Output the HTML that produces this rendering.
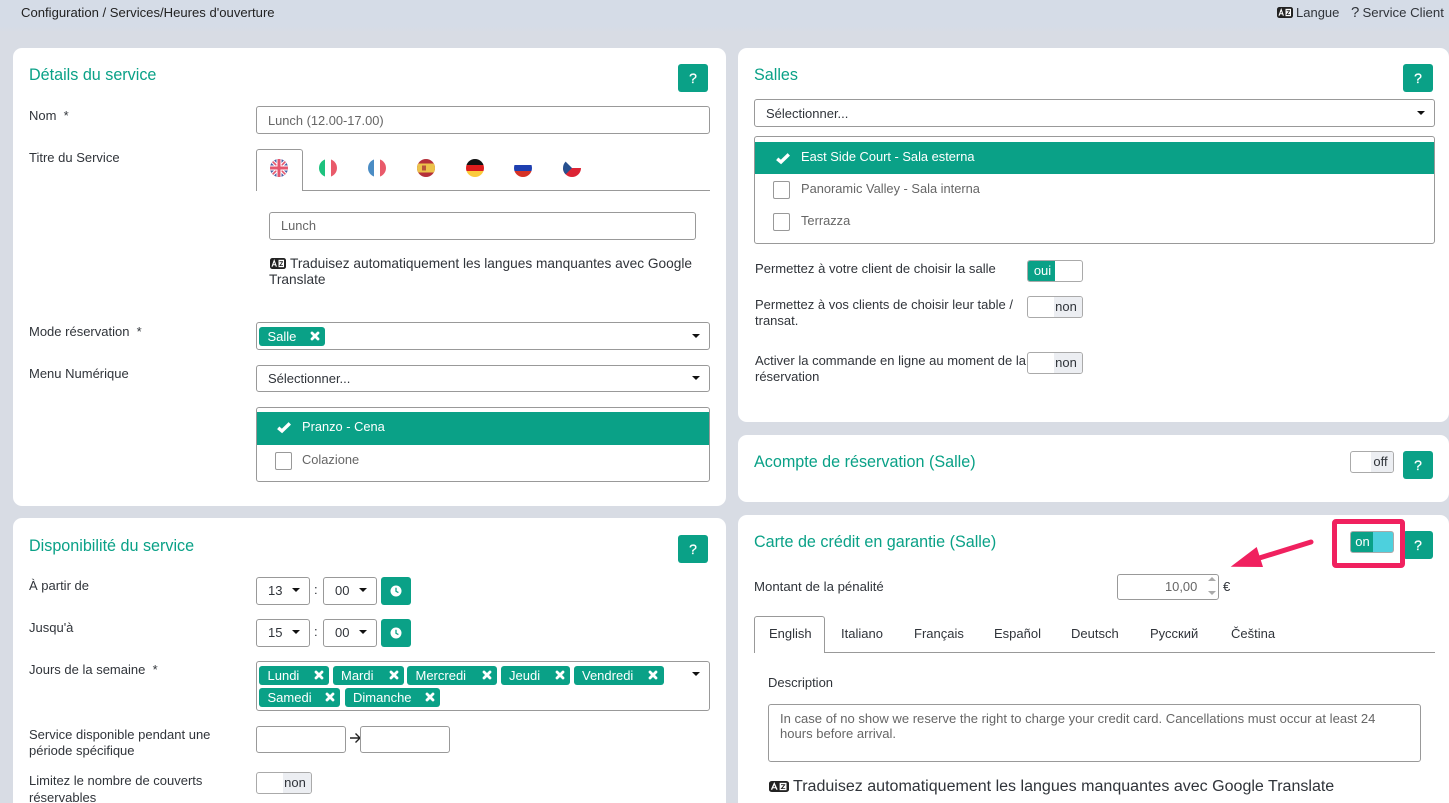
<!DOCTYPE html>
<html lang="fr"><head><meta charset="utf-8"><title>Heures d'ouverture</title>
<style>
html,body{margin:0;padding:0;width:1449px;height:803px;overflow:hidden;background:#d8dce4}
body{position:relative;font-family:"Liberation Sans",sans-serif;font-size:13px;color:#30343a}
.a,.t,.box,.card,.tag,.q,.sw,.cb{position:absolute;box-sizing:border-box}
.t{white-space:nowrap;line-height:16px}
.card{background:#fff;border-radius:9px}
.h{color:#0aa187;font-size:16.15px;line-height:20px}
.box{border:1px solid #999;border-radius:3px;background:#fff}
.q{background:#0aa187;border-radius:3px;color:#fff;font-size:14px;-webkit-text-stroke:.3px #fff;text-align:center;line-height:28px;width:30px;height:28px}
.g{color:#666;font-size:12.85px}
.tag{background:#0aa187;color:#fff;height:19px;line-height:19px;border-radius:3px;padding-left:8.5px;font-size:13px;white-space:nowrap}
.tag svg{position:absolute;top:4px}
.row{background:#0aa187;position:absolute}
.sw{border:1px solid #aaa;border-radius:3px;background:#fff;height:22px;overflow:hidden;font-size:13px;line-height:20px}
.sw b{position:absolute;top:0;bottom:0;font-weight:normal;text-align:center}
.cb{border:1px solid #999;border-radius:2px;width:17px;height:18px;background:#fff}
svg{position:absolute;overflow:visible}
</style></head><body>
<svg width="0" height="0" style="position:absolute"><defs>
<symbol id="x" viewBox="0 0 10 10"><path d="M2 2L8 8M8 2L2 8" stroke="#fff" stroke-width="2.8" stroke-linecap="round"/></symbol>
<symbol id="c" viewBox="0 0 16 14"><path d="M2.2 7.8L6 11L13.8 3.4" fill="none" stroke="#fff" stroke-width="3.4"/></symbol>
<symbol id="tr" viewBox="0 0 16 12" preserveAspectRatio="none"><rect x=".5" y=".5" width="15" height="11" rx="2" fill="#222" stroke="#222"/><rect x="8.5" y="2" width="5.5" height="8" fill="#fff"/><path d="M2 9.5L4.2 2.8L6.4 9.5M3 7.4H5.4" fill="none" stroke="#fff" stroke-width="1.1"/><path d="M9.6 4H13M12.6 4L10 8.3H13" fill="none" stroke="#222" stroke-width=".9"/></symbol>
<symbol id="clk" viewBox="0 0 12 12"><circle cx="6" cy="6" r="5.5" fill="#fff"/><path d="M6 2.8V6.3L8.4 7.6" fill="none" stroke="#0aa187" stroke-width="1.3"/></symbol>
</defs></svg>

<!-- top bar -->
<div class="a" style="left:0;top:0;width:1449px;height:32px;background:linear-gradient(#d5dce7 0,#d5dce7 27px,#d8dce4 32px)"></div>
<div class="t" style="left:21px;top:5px;font-size:13.1px;color:#222">Configuration / Services/Heures d'ouverture</div>
<svg style="left:1277px;top:7px" width="16" height="11"><use href="#tr"/></svg>
<div class="t" style="left:1296px;top:5px">Langue</div>
<div class="t" style="left:1351px;top:5px;font-size:15px">?</div>
<div class="t" style="left:1362.5px;top:5px;font-size:13.2px">Service Client</div>

<!-- Details card -->
<div class="card" style="left:13px;top:48px;width:713px;height:458px"></div>
<div class="t h" style="left:29px;top:65px">Détails du service</div>
<div class="q" style="left:678px;top:64px">?</div>
<div class="t" style="left:29px;top:108px">Nom&nbsp; *</div>
<div class="box" style="left:256px;top:106px;width:454px;height:28px"></div>
<div class="t g" style="left:268px;top:113px">Lunch (12.00-17.00)</div>
<div class="t" style="left:29px;top:150px">Titre du Service</div>
<div class="a" style="left:256px;top:190px;width:454px;height:1px;background:#999"></div>
<div class="a" style="left:256px;top:149px;width:47px;height:42px;background:#fff;border:1px solid #999;border-bottom:0;border-radius:3px 3px 0 0;box-sizing:border-box"></div>
<svg style="left:270px;top:159px" width="18" height="18" viewBox="0 0 18 18"><clipPath id="f1"><circle cx="9" cy="9" r="9"/></clipPath><g clip-path="url(#f1)"><rect width="18" height="18" fill="#4a5fa5"/><path d="M0 0L18 18M18 0L0 18" stroke="#fff" stroke-width="3.6"/><path d="M0 0L18 18M18 0L0 18" stroke="#e5566d" stroke-width="1.6"/><path d="M9 0V18M0 9H18" stroke="#fff" stroke-width="5"/><path d="M9 0V18M0 9H18" stroke="#e5566d" stroke-width="3"/></g></svg>
<svg style="left:319px;top:159px" width="18" height="18" viewBox="0 0 18 18"><clipPath id="f2"><circle cx="9" cy="9" r="9"/></clipPath><g clip-path="url(#f2)"><rect width="6" height="18" fill="#1cc27e"/><rect x="12" width="6" height="18" fill="#e95a6a"/></g></svg>
<svg style="left:368px;top:159px" width="18" height="18" viewBox="0 0 18 18"><clipPath id="f3"><circle cx="9" cy="9" r="9"/></clipPath><g clip-path="url(#f3)"><rect width="6" height="18" fill="#4a8cc4"/><rect x="12" width="6" height="18" fill="#e95a6a"/></g></svg>
<svg style="left:417px;top:159px" width="18" height="18" viewBox="0 0 18 18"><clipPath id="f4"><circle cx="9" cy="9" r="9"/></clipPath><g clip-path="url(#f4)"><rect width="18" height="18" fill="#b5303a"/><rect y="4.5" width="18" height="9" fill="#ecc24a"/><rect x="5" y="6.5" width="4" height="5" fill="#b8553a"/></g></svg>
<svg style="left:466px;top:159px" width="18" height="18" viewBox="0 0 18 18"><clipPath id="f5"><circle cx="9" cy="9" r="9"/></clipPath><g clip-path="url(#f5)"><rect width="18" height="6" fill="#111"/><rect y="6" width="18" height="6" fill="#dd1c1c"/><rect y="12" width="18" height="6" fill="#fbcb3c"/></g></svg>
<svg style="left:514px;top:159px" width="18" height="18" viewBox="0 0 18 18"><clipPath id="f6"><circle cx="9" cy="9" r="9"/></clipPath><g clip-path="url(#f6)"><rect width="18" height="6" fill="#fff"/><rect y="6" width="18" height="6" fill="#1e3fb0"/><rect y="12" width="18" height="6" fill="#d63226"/></g></svg>
<svg style="left:563px;top:159px" width="18" height="18" viewBox="0 0 18 18"><clipPath id="f7"><circle cx="9" cy="9" r="9"/></clipPath><g clip-path="url(#f7)"><rect width="18" height="9" fill="#fff"/><rect y="9" width="18" height="9" fill="#dc2434"/><path d="M0 0L9 9L0 18Z" fill="#27508f"/></g></svg>
<div class="box" style="left:269px;top:212px;width:427px;height:28px"></div>
<div class="t g" style="left:281px;top:218px">Lunch</div>
<svg style="left:269.5px;top:257.5px" width="16" height="11"><use href="#tr"/></svg>
<div class="t" style="left:290px;top:255.5px;font-size:13.7px">Traduisez automatiquement les langues manquantes avec Google</div>
<div class="t" style="left:269px;top:271.5px;font-size:13.7px">Translate</div>
<div class="t" style="left:29px;top:324px">Mode réservation&nbsp; *</div>
<div class="box" style="left:256px;top:322px;width:454px;height:28px"></div>
<div class="tag" style="left:259px;top:327px;width:66px">Salle<svg style="left:51px" width="10" height="10"><use href="#x"/></svg></div>
<div class="a" style="left:692px;top:334px;border:4px solid transparent;border-top:4.5px solid #111;border-bottom:0"></div>
<div class="t" style="left:29px;top:366px">Menu Numérique</div>
<div class="box" style="left:256px;top:365px;width:454px;height:27px"></div>
<div class="t" style="left:268px;top:371px">Sélectionner...</div>
<div class="a" style="left:692px;top:376px;border:4px solid transparent;border-top:4.5px solid #111;border-bottom:0"></div>
<div class="box" style="left:256px;top:407px;width:454px;height:75px"></div>
<div class="row" style="left:257px;top:412px;width:452px;height:33px"></div>
<svg style="left:276px;top:420px" width="16" height="14"><use href="#c"/></svg>
<div class="t" style="left:302px;top:419px;color:#fff;font-size:12.85px">Pranzo - Cena</div>
<div class="cb" style="left:275px;top:452px"></div>
<div class="t g" style="left:302px;top:452px">Colazione</div>

<!-- Disponibilite card -->
<div class="card" style="left:13px;top:518px;width:713px;height:300px"></div>
<div class="t h" style="left:29px;top:536px">Disponibilité du service</div>
<div class="q" style="left:678px;top:535px">?</div>
<div class="t" style="left:29px;top:578px">À partir de</div>
<div class="box" style="left:256px;top:577px;width:54px;height:28px"></div>
<div class="t" style="left:268px;top:583px">13</div>
<div class="a" style="left:292px;top:588px;border:4px solid transparent;border-top:4.5px solid #111;border-bottom:0"></div>
<div class="t" style="left:314px;top:582px">:</div>
<div class="box" style="left:323px;top:577px;width:54px;height:28px"></div>
<div class="t" style="left:335px;top:583px">00</div>
<div class="a" style="left:359px;top:588px;border:4px solid transparent;border-top:4.5px solid #111;border-bottom:0"></div>
<div class="a" style="left:381px;top:577px;width:30px;height:28px;background:#0aa187;border-radius:3px"><svg style="left:9px;top:8px" width="12" height="12"><use href="#clk"/></svg></div>
<div class="t" style="left:29px;top:620px">Jusqu'à</div>
<div class="box" style="left:256px;top:619px;width:54px;height:28px"></div>
<div class="t" style="left:268px;top:625px">15</div>
<div class="a" style="left:292px;top:630px;border:4px solid transparent;border-top:4.5px solid #111;border-bottom:0"></div>
<div class="t" style="left:314px;top:624px">:</div>
<div class="box" style="left:323px;top:619px;width:54px;height:28px"></div>
<div class="t" style="left:335px;top:625px">00</div>
<div class="a" style="left:359px;top:630px;border:4px solid transparent;border-top:4.5px solid #111;border-bottom:0"></div>
<div class="a" style="left:381px;top:619px;width:30px;height:28px;background:#0aa187;border-radius:3px"><svg style="left:9px;top:8px" width="12" height="12"><use href="#clk"/></svg></div>
<div class="t" style="left:29px;top:662px">Jours de la semaine&nbsp; *</div>
<div class="box" style="left:256px;top:661px;width:454px;height:50px"></div>
<div class="tag" style="left:259px;top:666px;width:70px">Lundi<svg style="left:55px" width="10" height="10"><use href="#x"/></svg></div>
<div class="tag" style="left:332.5px;top:666px;width:71px">Mardi<svg style="left:56px" width="10" height="10"><use href="#x"/></svg></div>
<div class="tag" style="left:407px;top:666px;width:90px">Mercredi<svg style="left:74.5px" width="10" height="10"><use href="#x"/></svg></div>
<div class="tag" style="left:500.5px;top:666px;width:69.5px">Jeudi<svg style="left:54px" width="10" height="10"><use href="#x"/></svg></div>
<div class="tag" style="left:573.5px;top:666px;width:90px">Vendredi<svg style="left:74.5px" width="10" height="10"><use href="#x"/></svg></div>
<div class="tag" style="left:259px;top:688px;width:81px">Samedi<svg style="left:66px" width="10" height="10"><use href="#x"/></svg></div>
<div class="tag" style="left:344.5px;top:688px;width:95px">Dimanche<svg style="left:80.5px" width="10" height="10"><use href="#x"/></svg></div>
<div class="a" style="left:692px;top:672px;border:4px solid transparent;border-top:4.5px solid #111;border-bottom:0"></div>
<div class="t" style="left:29px;top:727px">Service disponible pendant une</div>
<div class="t" style="left:29px;top:743px">période spécifique</div>
<div class="box" style="left:256px;top:726px;width:90px;height:27px"></div>
<svg style="left:349px;top:732px" width="12" height="12" viewBox="0 0 12 12"><path d="M1 6H11M6.5 1.5L11 6L6.5 10.5" fill="none" stroke="#222" stroke-width="1.4"/></svg>
<div class="box" style="left:360px;top:726px;width:90px;height:27px"></div>
<div class="t" style="left:29px;top:773px">Limitez le nombre de couverts</div>
<div class="t" style="left:29px;top:790px">réservables</div>
<div class="sw" style="left:256px;top:772px;width:56px"><b style="left:26px;right:0;padding-right:4px;background:#eceef2">non</b></div>

<!-- Salles card -->
<div class="card" style="left:738px;top:48px;width:711px;height:374px"></div>
<div class="t h" style="left:754px;top:65px">Salles</div>
<div class="q" style="left:1403px;top:64px">?</div>
<div class="box" style="left:754px;top:99px;width:681px;height:28px"></div>
<div class="t" style="left:766px;top:106px">Sélectionner...</div>
<div class="a" style="left:1417px;top:111px;border:4px solid transparent;border-top:4.5px solid #111;border-bottom:0"></div>
<div class="box" style="left:754px;top:136px;width:681px;height:108px"></div>
<div class="row" style="left:755px;top:142px;width:679px;height:32px"></div>
<svg style="left:775px;top:150.5px" width="16" height="14"><use href="#c"/></svg>
<div class="t" style="left:801px;top:149px;color:#fff;font-size:12.85px">East Side Court - Sala esterna</div>
<div class="cb" style="left:773px;top:181px"></div>
<div class="t g" style="left:801px;top:181px">Panoramic Valley - Sala interna</div>
<div class="cb" style="left:773px;top:213px"></div>
<div class="t g" style="left:801px;top:213px">Terrazza</div>
<div class="t" style="left:755px;top:261px;font-size:13.05px">Permettez à votre client de choisir la salle</div>
<div class="sw" style="left:1027px;top:260px;width:56px"><b style="left:0;width:27px;padding-left:2px;box-sizing:border-box;background:#0aa187;color:#fff">oui</b></div>
<div class="t" style="left:755px;top:297px">Permettez à vos clients de choisir leur table /</div>
<div class="t" style="left:755px;top:313px">transat.</div>
<div class="sw" style="left:1027px;top:296px;width:56px"><b style="left:26px;right:0;padding-right:4px;background:#eceef2">non</b></div>
<div class="t" style="left:755px;top:353px">Activer la commande en ligne au moment de la</div>
<div class="t" style="left:755px;top:369px">réservation</div>
<div class="sw" style="left:1027px;top:352px;width:56px"><b style="left:26px;right:0;padding-right:4px;background:#eceef2">non</b></div>

<!-- Acompte card -->
<div class="card" style="left:738px;top:435px;width:711px;height:67px"></div>
<div class="t h" style="left:754px;top:452px">Acompte de réservation (Salle)</div>
<div class="sw" style="left:1350px;top:451px;width:44px"><b style="left:20px;right:0;padding-right:3px;background:#eceef2">off</b></div>
<div class="q" style="left:1403px;top:451px">?</div>

<!-- Carte card -->
<div class="card" style="left:738px;top:515px;width:711px;height:300px"></div>
<div class="t h" style="left:754px;top:532px">Carte de crédit en garantie (Salle)</div>
<div class="q" style="left:1403px;top:531px">?</div>
<div class="a" style="left:1332px;top:518.5px;width:73px;height:49.5px;border:5px solid #f0215f;border-radius:4px;box-sizing:border-box"></div>
<div class="sw" style="left:1350px;top:531px;width:44px;background:#4dd0dd"><b style="left:0;width:22px;padding-left:1px;box-sizing:border-box;background:#0aa187;color:#fff">on</b></div>
<svg style="left:1225px;top:535px" width="92" height="36" viewBox="0 0 92 36"><path d="M86 7L28 25" stroke="#f0215f" stroke-width="5" stroke-linecap="round"/><path d="M5.7 31.7L31.7 12L38 32Z" fill="#f0215f"/></svg>
<div class="t" style="left:754px;top:579px;font-size:13.2px">Montant de la pénalité</div>
<div class="box" style="left:1117px;top:574px;width:102px;height:26px"></div>
<div class="t g" style="left:1165px;top:579px;font-size:12.9px">10,00</div>
<div class="a" style="left:1208px;top:577px;border:4px solid transparent;border-bottom:4.5px solid #aaa;border-top:0"></div>
<div class="a" style="left:1208px;top:591px;border:4px solid transparent;border-top:4.5px solid #aaa;border-bottom:0"></div>
<div class="t" style="left:1223px;top:579px">€</div>
<div class="a" style="left:754px;top:652px;width:681px;height:1px;background:#999"></div>
<div class="a" style="left:754px;top:616px;width:71px;height:37px;background:#fff;border:1px solid #999;border-bottom:0;border-radius:3px 3px 0 0;box-sizing:border-box"></div>
<div class="t" style="left:769px;top:626px">English</div>
<div class="t" style="left:841px;top:626px">Italiano</div>
<div class="t" style="left:914px;top:626px">Français</div>
<div class="t" style="left:994px;top:626px">Español</div>
<div class="t" style="left:1071px;top:626px">Deutsch</div>
<div class="t" style="left:1150px;top:626px">Русский</div>
<div class="t" style="left:1231px;top:626px">Čeština</div>
<div class="t" style="left:768px;top:675px">Description</div>
<div class="box" style="left:768px;top:704px;width:653px;height:58px"></div>
<div class="t g" style="left:780px;top:711px;font-size:13.05px">In case of no show we reserve the right to charge your credit card. Cancellations must occur at least 24</div>
<div class="t g" style="left:780px;top:726px;font-size:13.05px">hours before arrival.</div>
<svg style="left:768.5px;top:780.5px" width="20" height="11"><use href="#tr"/></svg>
<div class="t" style="left:793px;top:778px;font-size:16.05px">Traduisez automatiquement les langues manquantes avec Google Translate</div>
</body></html>
